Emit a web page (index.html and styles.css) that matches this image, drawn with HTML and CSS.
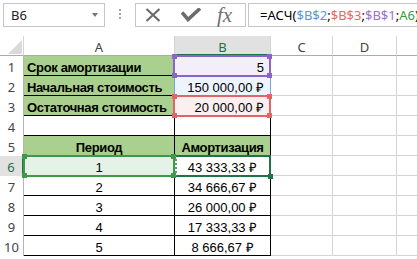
FILE: index.html
```html
<!DOCTYPE html>
<html lang="ru">
<head>
<meta charset="utf-8">
<title>АСЧ</title>
<link rel="stylesheet" href="styles.css">
</head>
<body>
<div class="toolbar">
  <div class="namebox"><span>B6</span><span class="nb-arrow"></span></div>
  <div class="sep"><i></i><i></i><i></i></div>
  <div class="fxbtns">
    <svg class="ic-x" viewBox="0 0 16 14"><path d="M1.5 1 L14.5 13 M14.5 1 L1.5 13" stroke="#6b6b6b" stroke-width="2.2" fill="none"/></svg>
    <svg class="ic-check" viewBox="0 0 20 14"><path d="M1 4.5 L7 11.5 L19 0.5" stroke="#6b6b6b" stroke-width="3.6" fill="none"/></svg>
    <span class="ic-fx">fx</span>
  </div>
  <div class="formula">=АСЧ(<span class="rf-b">$B$2</span>;<span class="rf-r">$B$3</span>;<span class="rf-p">$B$1</span>;<span class="rf-g">A6</span>)</div>
</div>
<div class="grid">
  <div class="corner"><span class="tri"></span></div>
  <div class="ch">A</div><div class="ch sel">B</div><div class="ch">C</div><div class="ch">D</div><div class="ch"></div>

  <div class="rh">1</div>
  <div class="c bk hd">Срок амортизации</div>
  <div class="c bk rt fp">5</div>
  <div class="c"></div><div class="c"></div><div class="c"></div>

  <div class="rh">2</div>
  <div class="c bk hd">Начальная стоимость</div>
  <div class="c bk rt fb">150 000,00 ₽</div>
  <div class="c"></div><div class="c"></div><div class="c"></div>

  <div class="rh">3</div>
  <div class="c bk hd">Остаточная стоимость</div>
  <div class="c bk rt fr">20 000,00 ₽</div>
  <div class="c"></div><div class="c"></div><div class="c"></div>

  <div class="rh">4</div>
  <div class="c bk"></div>
  <div class="c bk"></div>
  <div class="c"></div><div class="c"></div><div class="c"></div>

  <div class="rh">5</div>
  <div class="c bk hd ctr">Период</div>
  <div class="c bk hd ctr">Амортизация</div>
  <div class="c"></div><div class="c"></div><div class="c"></div>

  <div class="rh sel">6</div>
  <div class="c bk ctr fg">1</div>
  <div class="c bk ctr">43 333,33 ₽</div>
  <div class="c"></div><div class="c"></div><div class="c"></div>

  <div class="rh">7</div>
  <div class="c bk ctr">2</div>
  <div class="c bk ctr">34 666,67 ₽</div>
  <div class="c"></div><div class="c"></div><div class="c"></div>

  <div class="rh">8</div>
  <div class="c bk ctr">3</div>
  <div class="c bk ctr">26 000,00 ₽</div>
  <div class="c"></div><div class="c"></div><div class="c"></div>

  <div class="rh">9</div>
  <div class="c bk ctr">4</div>
  <div class="c bk ctr">17 333,33 ₽</div>
  <div class="c"></div><div class="c"></div><div class="c"></div>

  <div class="rh">10</div>
  <div class="c bk ctr">5</div>
  <div class="c bk ctr">8 666,67 ₽</div>
  <div class="c"></div><div class="c"></div><div class="c"></div>

  <div class="ov ov-b"></div>
  <div class="ov ov-p"><i class="h tl"></i><i class="h tr"></i><i class="h bl"></i><i class="h br"></i></div>
  <div class="ov ov-r"><i class="h tl"></i><i class="h tr"></i><i class="h bl"></i><i class="h br"></i></div>
  <div class="ov ov-g"><i class="h tl"></i><i class="h tr"></i><i class="h bl"></i><i class="h br"></i></div>
  <div class="ov ov-a"><i class="fh"></i></div>
</div>
</body>
</html>
```

FILE: styles.css
```css
* { box-sizing: border-box; margin: 0; padding: 0; }
html, body { width: 417px; height: 259px; overflow: hidden; background: #fff; }
body { font-family: "Noto Sans", "Open Sans", sans-serif; }

.toolbar { display: flex; align-items: flex-start; height: 36px; padding: 3px 0 0 3px; }
.namebox { flex: none; width: 102px; height: 24px; border: 1px solid #c6c6c6; display: flex; align-items: center; justify-content: space-between; padding: 0 6px 0 7px; font-size: 13px; color: #222; }
.nb-arrow { width: 0; height: 0; border-left: 3.5px solid transparent; border-right: 3.5px solid transparent; border-top: 4px solid #777; }
.sep { flex: none; width: 30px; display: flex; flex-direction: column; align-items: center; gap: 2px; padding-top: 6px; }
.sep i { display: block; width: 2px; height: 2px; background: #a6a6a6; }
.fxbtns { flex: none; width: 111px; height: 24px; border: 1px solid #c6c6c6; display: flex; align-items: center; padding-left: 9px; }
.ic-x { width: 16px; height: 14px; }
.ic-check { width: 20px; height: 14px; margin-left: 20px; }
.ic-fx { margin-left: 16px; font-family: "Liberation Serif", serif; font-style: italic; font-size: 21px; line-height: 22px; color: #707070; }
.formula { flex: none; width: 200px; height: 24px; margin-left: 2px; border: 1px solid #c6c6c6; padding-left: 11px; font-size: 13px; line-height: 22px; white-space: nowrap; color: #000; }
.rf-b { color: #5a96e0; }
.rf-r { color: #e8686a; }
.rf-p { color: #9a72d4; }
.rf-g { color: #3c9a3c; }

.grid { position: relative; display: grid; grid-template-columns: 24px 151px 96px 62px 64px 60px; grid-template-rows: repeat(11, 20px); }
.corner { display: flex; align-items: flex-end; justify-content: flex-end; padding: 0 1px 1px 0; border-right: 1px solid #d4d4d4; border-bottom: 1px solid #ababab; }
.tri { width: 0; height: 0; border-left: 14px solid transparent; border-bottom: 14px solid #dadada; }
.ch { border-right: 1px solid #d4d4d4; border-bottom: 1px solid #ababab; text-align: center; font-size: 13px; line-height: 20px; padding-top: 1px; color: #444; }
.ch.sel { background: #e1e1e1; color: #217346; border-bottom: 2px solid #217346; }
.rh { border-right: 1px solid #b5b5b5; text-align: center; font-size: 13px; line-height: 19px; padding-top: 2px; color: #444; }
.rh.sel { background: #e1e1e1; color: #217346; border-right: 2px solid #217346; }

.c { display: flex; align-items: flex-end; padding: 0 3px; border-right: 1px solid #d4d4d4; border-bottom: 1px solid #d4d4d4; font-family: "Liberation Sans", Arial, sans-serif; font-size: 13px; line-height: 15px; white-space: nowrap; color: #000; }
.c.bk { border-right-color: #000; border-bottom-color: #000; }
.c.hd { background: #a9d08e; font-weight: bold; letter-spacing: -0.35px; }
.c.ctr { justify-content: center; }
.c.rt { justify-content: flex-end; padding-right: 6px; }
.fp { background: #f2effa; }
.fb { background: #eef4fd; }
.fr { background: #fdefef; }
.fg { background: #e6f1e7; }

.ov { position: absolute; }
.ov-b { left: 174px; top: 40px; width: 97px; height: 20px; border-left: 1px solid #6fa8dc; border-right: 1px solid #6fa8dc; }
.ov-p { left: 173px; top: 19px; width: 98px; height: 22px; border: 2px solid #8e63c9; }
.ov-r { left: 173px; top: 59px; width: 98px; height: 22px; border: 2px solid #e06666; }
.ov-g { left: 23px; top: 119px; width: 152px; height: 22px; border: 2px solid #3c9a48; }
.ov-a { left: 175px; top: 119px; width: 96px; height: 22px; border: 2px solid #217346; border-left: 2px dotted #5d9f6e; }
.h { position: absolute; width: 5px; height: 5px; }
.ov-p .h { background: #8e63c9; }
.ov-r .h { background: #e06666; }
.ov-g .h { background: #3c9a48; }
.tl { left: -3px; top: -3px; }
.tr { right: -3px; top: -3px; }
.bl { left: -3px; bottom: -3px; }
.br { right: -3px; bottom: -3px; }
.fh { position: absolute; right: -4px; bottom: -4px; width: 5px; height: 5px; background: #217346; }
```
